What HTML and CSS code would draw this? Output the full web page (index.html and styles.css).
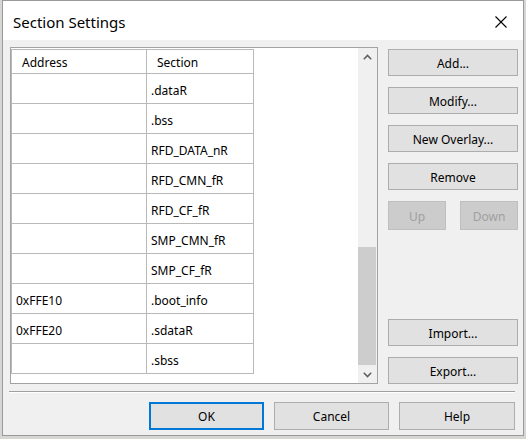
FILE: index.html
```html
<!DOCTYPE html>
<html>
<head>
<meta charset="utf-8">
<link rel="stylesheet" href="styles.css">
</head>
<body>
<div class="window">
  <div class="titlebar">
    <span class="title">Section Settings</span>
    <span class="close">
      <svg width="12" height="12" viewBox="0 0 12 12"><path d="M0.5 0.5 L11.5 11.5 M11.5 0.5 L0.5 11.5" stroke="#000" stroke-width="1.1" fill="none"/></svg>
    </span>
  </div>
  <div class="content">
    <div class="main">
      <div class="listbox">
        <div class="grid-area">
          <table class="grid">
            <thead>
              <tr><th class="c-addr">Address</th><th class="c-sec">Section</th></tr>
            </thead>
            <tbody>
              <tr><td></td><td>.dataR</td></tr>
              <tr><td></td><td>.bss</td></tr>
              <tr><td></td><td>RFD_DATA_nR</td></tr>
              <tr><td></td><td>RFD_CMN_fR</td></tr>
              <tr><td></td><td>RFD_CF_fR</td></tr>
              <tr><td></td><td>SMP_CMN_fR</td></tr>
              <tr><td></td><td>SMP_CF_fR</td></tr>
              <tr><td>0xFFE10</td><td>.boot_info</td></tr>
              <tr><td>0xFFE20</td><td>.sdataR</td></tr>
              <tr><td></td><td>.sbss</td></tr>
            </tbody>
          </table>
        </div>
        <div class="vscroll">
          <div class="arrow">
            <svg width="9" height="6" viewBox="0 0 9 6"><path d="M0.8 5.2 L4.5 1.5 L8.2 5.2" stroke="#606060" stroke-width="1.6" fill="none"/></svg>
          </div>
          <div class="track">
            <div class="thumb"></div>
          </div>
          <div class="arrow">
            <svg width="9" height="6" viewBox="0 0 9 6"><path d="M0.8 0.8 L4.5 4.5 L8.2 0.8" stroke="#606060" stroke-width="1.6" fill="none"/></svg>
          </div>
        </div>
      </div>
      <div class="side">
        <button class="btn">Add...</button>
        <button class="btn">Modify...</button>
        <button class="btn">New Overlay...</button>
        <button class="btn">Remove</button>
        <div class="pair">
          <button class="btn small disabled">Up</button>
          <button class="btn small disabled">Down</button>
        </div>
        <button class="btn push">Import...</button>
        <button class="btn">Export...</button>
      </div>
    </div>
    <div class="separator"></div>
    <div class="footer">
      <button class="btn fbtn default">OK</button>
      <button class="btn fbtn">Cancel</button>
      <button class="btn fbtn">Help</button>
    </div>
  </div>
</div>
</body>
</html>
```

FILE: styles.css
```css
* { box-sizing: border-box; }
html, body {
  margin: 0;
  padding: 0;
}
body {
  background: #d6d6d2;
  width: 526px;
  height: 439px;
  overflow: hidden;
  font-family: "Noto Sans", "Open Sans", sans-serif;
  font-size: 12px;
  color: #000;
}
.window {
  margin-left: 2px;
  width: 522px;
  height: 436px;
  background: #f0f0f0;
  border: 1px solid #9a9a9a;
  display: flex;
  flex-direction: column;
}
.titlebar {
  height: 39px;
  background: #fff;
  display: flex;
  align-items: center;
  justify-content: space-between;
  padding: 0 16px 0 10px;
  flex: none;
}
.title {
  font-size: 15px;
  color: #000;
  margin-top: 3px;
}
.close {
  display: flex;
  margin-top: 3px;
}
.content {
  flex: 1;
  padding: 7px 5px 0 7px;
  display: flex;
  flex-direction: column;
}
.main {
  display: flex;
  gap: 10px;
  height: 337px;
}
.listbox {
  width: 368px;
  height: 337px;
  border: 1px solid #a3a3a3;
  background: #fff;
  display: flex;
}
.grid-area {
  flex: 1;
  padding-top: 1px;
}
.grid {
  border-collapse: collapse;
  table-layout: fixed;
  width: 242px;
}
.grid th, .grid td {
  border: 1px solid #b9b9b9;
  font-weight: normal;
  text-align: left;
  white-space: nowrap;
  padding: 0;
}
.grid th {
  height: 24px;
  padding: 1px 0 0 10px;
}
.grid th.c-addr { width: 135px; }
.grid th.c-sec { width: 107px; }
.grid td {
  height: 30px;
  padding: 3px 0 0 4px;
}
.vscroll {
  width: 19px;
  background: #f0f0f0;
  display: flex;
  flex-direction: column;
}
.arrow {
  height: 17px;
  display: flex;
  align-items: center;
  justify-content: center;
  flex: none;
}
.track {
  flex: 1;
  display: flex;
  flex-direction: column;
  justify-content: flex-end;
}
.thumb {
  height: 118px;
  background: #cdcdcd;
  margin: 0 1px 1px 0;
}
.side {
  width: 130px;
  display: flex;
  flex-direction: column;
  gap: 11px;
  padding-top: 2px;
}
.btn {
  font-family: "Noto Sans", "Open Sans", sans-serif;
  font-size: 12px;
  color: #000;
  background: #e1e1e1;
  border: 1px solid #adadad;
  height: 27px;
  padding: 1px 0 0 0;
  margin: 0;
  display: flex;
  align-items: center;
  justify-content: center;
  flex: none;
}
.pair {
  display: flex;
  justify-content: space-between;
  height: 29px;
}
.small {
  width: 58px;
  height: 29px;
}
.disabled {
  background: #cccccc;
  border-color: #bfbfbf;
  color: #a0a0a0;
}
.push {
  margin-top: auto;
}
.separator {
  margin: 7px 3px 0 -1px;
  border-top: 1px solid #a0a0a0;
  border-bottom: 1px solid #fff;
}
.footer {
  display: flex;
  justify-content: flex-end;
  gap: 10px;
  padding-right: 3px;
  margin-top: 9px;
}
.fbtn {
  width: 115px;
  height: 28px;
}
.fbtn:last-child { width: 116px; }
.default {
  border: 2px solid #0078d7;
}
```
